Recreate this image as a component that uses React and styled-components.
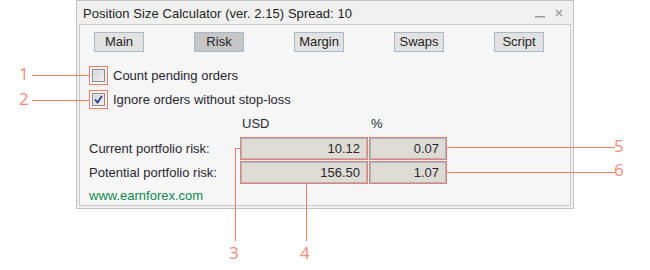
import React from 'react'
import styled, { createGlobalStyle } from 'styled-components'

const GlobalStyle = createGlobalStyle`
  body {
    margin: 0;
    background: #ffffff;
    font-family: 'Liberation Sans', Arial, sans-serif;
  }
`

const Stage = styled.div`
  position: relative;
  width: 650px;
  height: 270px;
  overflow: hidden;
`

const Window = styled.div`
  box-sizing: border-box;
  margin-left: 76px;
  width: 498px;
  height: 209px;
  border: 1px solid #c3c3c3;
  background: #f0f0f0;
  display: flex;
  flex-direction: column;
  padding: 0 2px 2px;
`

const TitleBar = styled.div`
  height: 23px;
  display: flex;
  align-items: center;
  padding-left: 4px;
  padding-right: 8px;
  font-size: 13px;
  color: #232323;
`

const Title = styled.div`
  flex: 1;
  padding-top: 1px;
  letter-spacing: 0.05px;
`

const TitleControls = styled.div`
  display: flex;
  align-items: center;
  gap: 10px;
`

const Panel = styled.div`
  flex: 1;
  border: 1px solid #cbcbcb;
  background: #f6f6f6;
  padding: 7px 0 0 9px;
  display: flex;
  flex-direction: column;
`

const Tabs = styled.div`
  display: flex;
  gap: 50px;
  padding-left: 5px;
`

const TabButton = styled.div`
  box-sizing: border-box;
  width: 50px;
  height: 20px;
  border: 1px solid #a9b8c8;
  background: ${p => (p.$active ? '#c6c6c6' : '#e2e2e2')};
  color: #232323;
  font-size: 13px;
  line-height: 18px;
  text-align: center;
`

const Options = styled.div`
  display: flex;
  flex-direction: column;
  gap: 5px;
  margin-top: 14px;
`

const OptionRow = styled.label`
  display: flex;
  align-items: center;
  gap: 5px;
  font-size: 13px;
  color: #2a2632;
`

const Mark = styled.span`
  box-sizing: border-box;
  width: 19px;
  height: 19px;
  padding: 2px;
  border: 1px solid #f47d6d;
  display: flex;
`

const Box = styled.span`
  box-sizing: border-box;
  width: 13px;
  height: 13px;
  border: 1px solid #8b8b8b;
  box-shadow: inset 0 0 0 1px #e8e8e8;
  background: linear-gradient(135deg, #d0d0d0, #f4f4f4);
  display: flex;
  align-items: center;
  justify-content: center;
`

const RiskGrid = styled.div`
  display: grid;
  grid-template-columns: 149px 126px 76px;
  column-gap: 3px;
  row-gap: 3px;
  align-items: center;
  margin-top: 7px;
  font-size: 13px;
  color: #2a2632;
`

const ColHead = styled.div`
  height: 15px;
  line-height: 15px;
  padding-left: 1px;
  margin-bottom: 4px;
`

const RowLabel = styled.div`
  line-height: 21px;
`

const Field = styled.div`
  box-sizing: border-box;
  height: 21px;
  border: 1px solid #a6b6cb;
  background: #dedcd3;
  box-shadow: 0 0 0 1px #f47d6d;
  text-align: right;
  padding-right: 6px;
  line-height: 19px;
`

const Footer = styled.div`
  margin-top: 5px;
  font-size: 13px;
  color: #0f8a4f;
`

const Callout = styled.div`
  position: absolute;
  font-family: 'Open Sans', sans-serif;
  font-size: 17px;
  line-height: 17px;
  color: #f58a78;
`

const Line = styled.div`
  position: absolute;
  background: #f47d6d;
`

const Check = () => (
  <svg width="9" height="9" viewBox="0 0 9 9">
    <path d="M1 4.5 L3.5 7.5 L8 1" fill="none" stroke="#2b3f9a" strokeWidth="1.8" />
  </svg>
)

const callouts = [
  { n: '1', x: 19, y: 65, lines: [{ left: 32, top: 75, width: 57, height: 1 }] },
  { n: '2', x: 19, y: 90, lines: [{ left: 32, top: 100, width: 57, height: 1 }] },
  {
    n: '3',
    x: 229,
    y: 244,
    lines: [
      { left: 235, top: 148, width: 1, height: 93 },
      { left: 235, top: 148, width: 5, height: 1 },
    ],
  },
  { n: '4', x: 300, y: 244, lines: [{ left: 306, top: 184, width: 1, height: 57 }] },
  { n: '5', x: 614, y: 137, lines: [{ left: 447, top: 147, width: 168, height: 1 }] },
  { n: '6', x: 614, y: 161, lines: [{ left: 447, top: 172, width: 168, height: 1 }] },
]

function App() {
  return (
    <>
      <GlobalStyle />
      <Stage>
        <Window>
          <TitleBar>
            <Title>Position Size Calculator (ver. 2.15) Spread: 10</Title>
            <TitleControls>
              <svg width="10" height="10" viewBox="0 0 10 10">
                <rect x="0" y="8" width="10" height="1.5" fill="#9a9a9a" />
              </svg>
              <svg width="8" height="8" viewBox="0 0 8 8">
                <path d="M1 1 L7 7 M7 1 L1 7" stroke="#a0a0a0" strokeWidth="1.6" />
              </svg>
            </TitleControls>
          </TitleBar>
          <Panel>
            <Tabs>
              <TabButton>Main</TabButton>
              <TabButton $active>Risk</TabButton>
              <TabButton>Margin</TabButton>
              <TabButton>Swaps</TabButton>
              <TabButton>Script</TabButton>
            </Tabs>
            <Options>
              <OptionRow>
                <Mark><Box /></Mark>
                Count pending orders
              </OptionRow>
              <OptionRow>
                <Mark><Box><Check /></Box></Mark>
                Ignore orders without stop-loss
              </OptionRow>
            </Options>
            <RiskGrid>
              <div />
              <ColHead>USD</ColHead>
              <ColHead>%</ColHead>
              <RowLabel>Current portfolio risk:</RowLabel>
              <Field>10.12</Field>
              <Field>0.07</Field>
              <RowLabel>Potential portfolio risk:</RowLabel>
              <Field>156.50</Field>
              <Field>1.07</Field>
            </RiskGrid>
            <Footer>www.earnforex.com</Footer>
          </Panel>
        </Window>
        {callouts.map(c => (
          <React.Fragment key={c.n}>
            {c.lines.map((l, i) => (
              <Line key={i} style={l} />
            ))}
            <Callout style={{ left: c.x, top: c.y }}>{c.n}</Callout>
          </React.Fragment>
        ))}
      </Stage>
    </>
  )
}

export default App
